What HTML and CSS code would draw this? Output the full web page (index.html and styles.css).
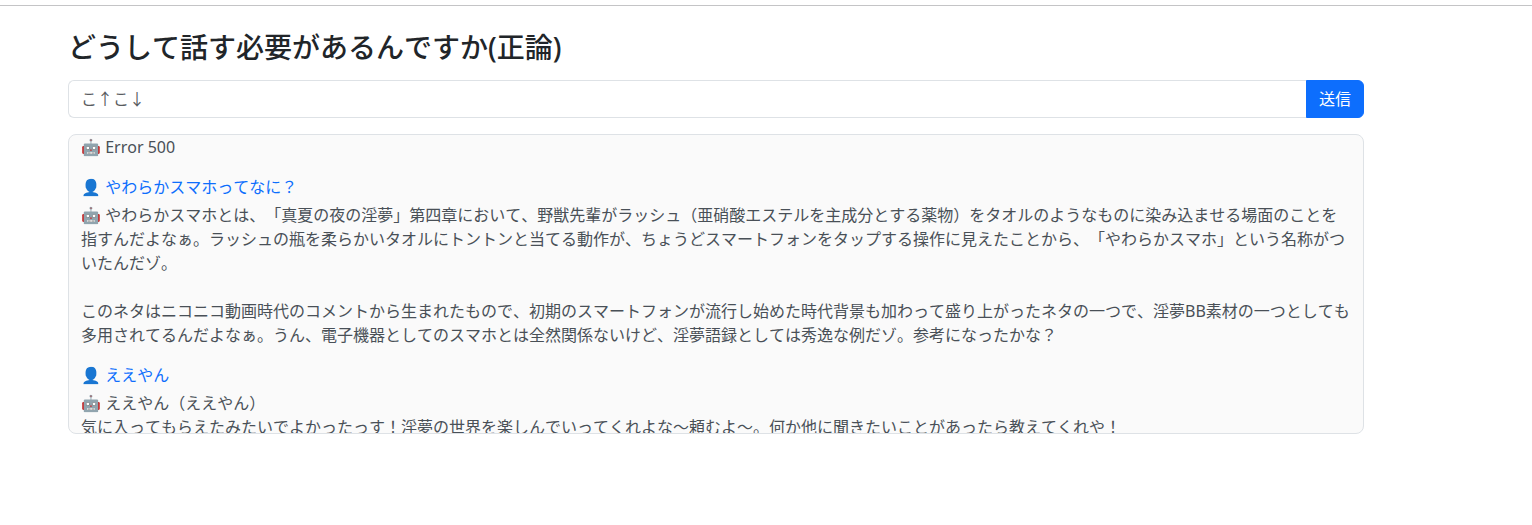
FILE: index.html
```html
<!DOCTYPE html>
<html lang="ja">
<head>
<meta charset="utf-8">
<title>どうして話す必要があるんですか(正論)</title>
<link rel="stylesheet" href="styles.css">
</head>
<body>
<hr class="rule">
<main class="page">
  <h1 class="title">どうして話す必要があるんですか(正論)</h1>
  <form class="input-group">
    <input class="field" type="text" placeholder="こ↑こ↓">
    <button class="send" type="button">送信</button>
  </form>
  <section class="log">
    <div class="bot">🤖 Error 500</div>
    <div class="user">👤 やわらかスマホってなに？</div>
    <div class="bot">🤖 やわらかスマホとは、「真夏の夜の淫夢」第四章において、野獣先輩がラッシュ（亜硝酸エステルを主成分とする薬物）をタオルのようなものに染み込ませる場面のことを指すんだよなぁ。ラッシュの瓶を柔らかいタオルにトントンと当てる動作が、ちょうどスマートフォンをタップする操作に見えたことから、「やわらかスマホ」という名称がついたんだゾ。<br><br>このネタはニコニコ動画時代のコメントから生まれたもので、初期のスマートフォンが流行し始めた時代背景も加わって盛り上がったネタの一つで、淫夢BB素材の一つとしても多用されてるんだよなぁ。うん、電子機器としてのスマホとは全然関係ないけど、淫夢語録としては秀逸な例だゾ。参考になったかな？</div>
    <div class="user">👤 ええやん</div>
    <div class="bot">🤖 ええやん（ええやん）<br>気に入ってもらえたみたいでよかったっす！淫夢の世界を楽しんでいってくれよな〜頼むよ〜。何か他に聞きたいことがあったら教えてくれや！</div>
  </section>
</main>
</body>
</html>
```
FILE: styles.css
```css
* { box-sizing: border-box; }
html, body { margin: 0; padding: 0; }
body {
  background: #fff;
  color: #212529;
  font-family: "Noto Sans", "Noto Sans CJK JP", sans-serif;
  font-size: 16px;
  line-height: 24px;
  text-spacing-trim: space-all;
  font-kerning: none;
  font-feature-settings: "kern" 0, "palt" 0, "chws" 0, "halt" 0;
}
.rule {
  margin: 5px 0 0;
  border: 0;
  border-top: 1px solid #c4c4c6;
  height: 0;
}
.page {
  width: 1296px;
  margin-left: 68px;
  padding-top: 21px;
}
.title {
  margin: 0 0 13px;
  font-size: 28px;
  font-weight: 500;
  line-height: 40px;
}
.input-group {
  display: flex;
  height: 38px;
  margin-bottom: 16px;
}
.field {
  flex: 1;
  min-width: 0;
  padding: 6px 12px;
  border: 1px solid #dee2e6;
  border-right: 0;
  border-radius: 6px 0 0 6px;
  background: #fff;
  color: #212529;
  font: inherit;
  outline: 0;
}
.field::placeholder {
  color: #595c5f;
  opacity: 1;
}
.send {
  width: 58px;
  padding: 6px 12px;
  border: 1px solid #0d6efd;
  border-radius: 0 6px 6px 0;
  background: #0d6efd;
  color: #fff;
  font: inherit;
}
.log {
  height: 300px;
  overflow: hidden;
  padding: 0 12px;
  border: 1px solid #dee2e6;
  border-radius: 8px;
  background: #fafafa;
  color: #495057;
}
.bot { margin-bottom: 16px; }
.user { margin-bottom: 4px; color: #0d6efd; }
```
